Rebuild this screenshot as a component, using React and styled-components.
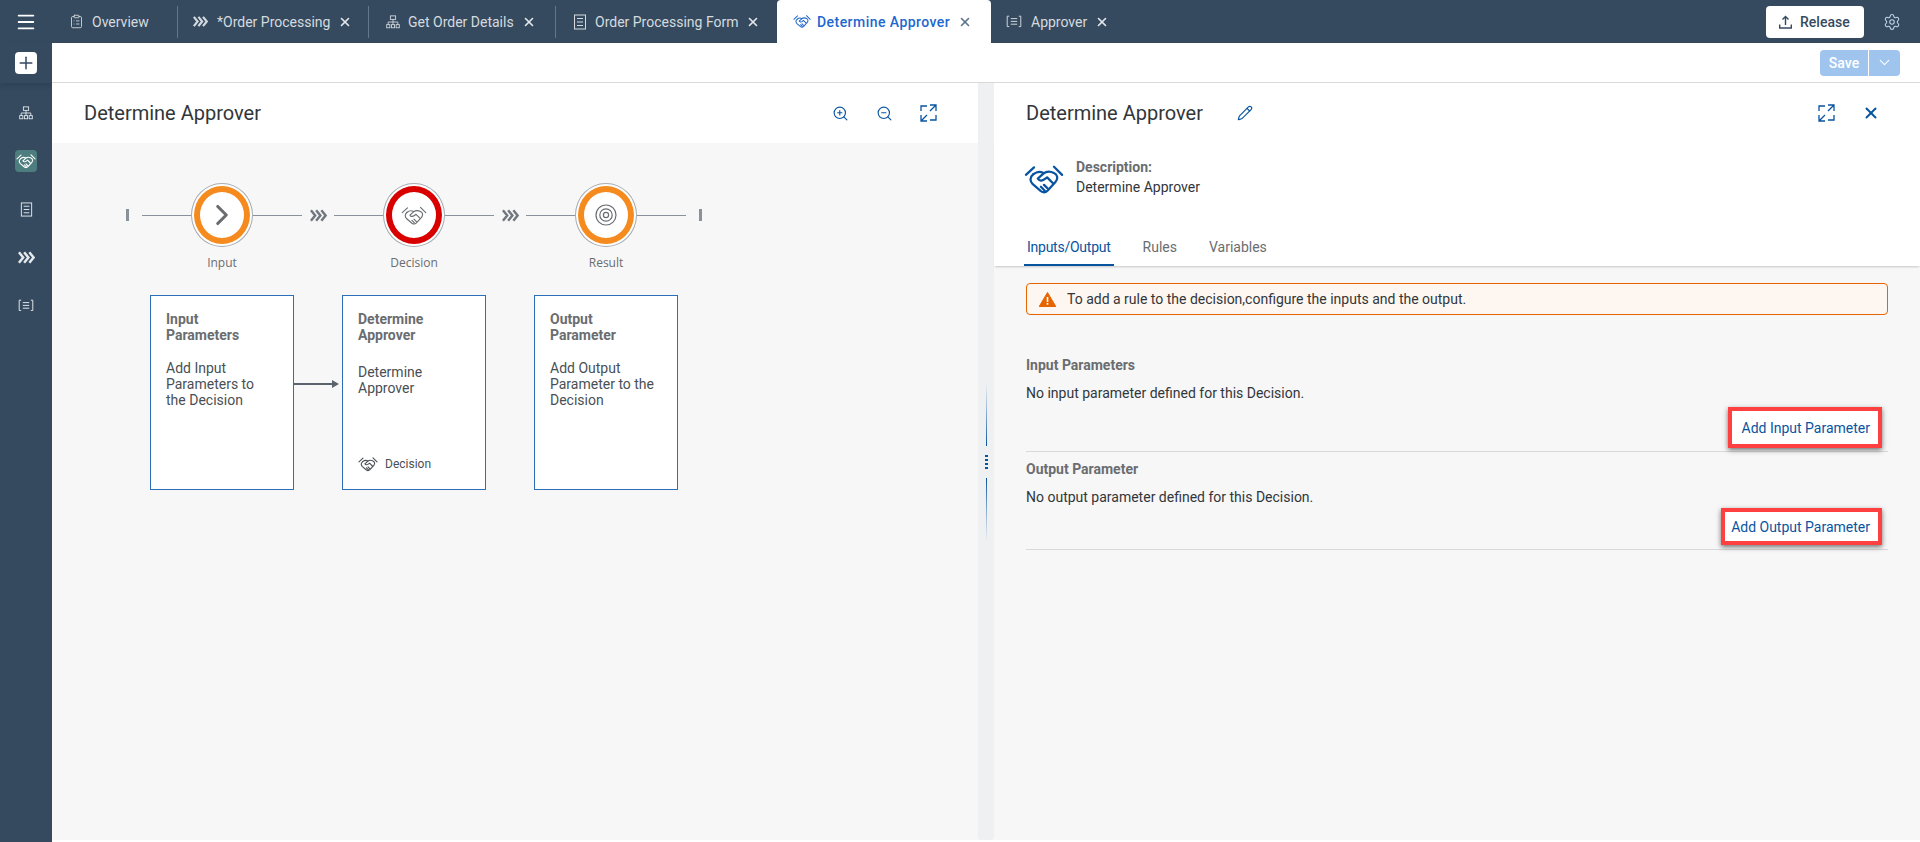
import React from 'react';
import styled, { createGlobalStyle } from 'styled-components';
import { X, ZoomIn, ZoomOut, Pencil, Settings, ChevronDown, ChevronRight, ClipboardList, Menu, Plus } from 'lucide-react';

const GlobalStyle = createGlobalStyle`
  html, body { margin: 0; padding: 0; height: 100%; background: #fff; }
  * { box-sizing: border-box; }
  body { font-family: Roboto, "Noto Sans", Arial, sans-serif; color: #32363a; overflow: hidden; }
`;

const Page = styled.div`
  display: flex;
  flex-direction: column;
  height: 842px;
  width: 1920px;
`;

// top shell bar with the editor tabs
const TopBar = styled.header`
  display: flex;
  align-items: center;
  height: 43px;
  background: #354a5f;
  flex: none;
`;

const MenuButton = styled.div`
  width: 52px;
  display: flex;
  justify-content: center;
  color: #fff;
`;

const TabList = styled.div`
  display: flex;
  align-items: center;
  flex: 1;
  align-self: stretch;
`;

const Tab = styled.div`
  display: flex;
  align-items: center;
  width: ${p => p.$w}px;
  padding-left: ${p => p.$pl}px;
  height: ${p => (p.$active ? '43px' : '32px')};
  font-size: 14px;
  font-weight: ${p => (p.$active ? 500 : 400)};
  letter-spacing: ${p => (p.$active ? '0.45px' : '0')};
  color: ${p => (p.$active ? '#1d67cf' : '#d5dadf')};
  background: ${p => (p.$active ? '#fff' : 'transparent')};
  border-radius: ${p => (p.$active ? '4px 4px 0 0' : '0')};
  border-right: ${p => (p.$sep ? '1px solid #64778a' : 'none')};
  white-space: nowrap;
`;

const TabIcon = styled.span`
  display: flex;
  width: ${p => p.$w || 23}px;
  flex: none;
`;

const TabClose = styled.span`
  display: flex;
  margin-left: 8px;
  color: ${p => (p.$dark ? '#5b738b' : '#e4e8ec')};
`;

const ReleaseButton = styled.button`
  display: flex;
  align-items: center;
  gap: 8px;
  width: 98px;
  height: 32px;
  padding: 0 0 0 13px;
  border: none;
  border-radius: 4px;
  background: #fff;
  color: #354a5f;
  font: 500 14px Roboto, sans-serif;
`;

const GearButton = styled.div`
  display: flex;
  margin: 0 19px 0 19px;
  color: #c3d4e6;
`;

const Body = styled.div`
  display: flex;
  flex: 1;
  min-height: 0;
`;

const Sidebar = styled.nav`
  width: 52px;
  flex: none;
  background: #354a5f;
  display: flex;
  flex-direction: column;
`;

const SideTop = styled.div`
  height: 40px;
  display: flex;
  align-items: center;
  justify-content: center;
  box-shadow: 0 3px 5px rgba(0, 0, 0, 0.12);
`;

const PlusButton = styled.div`
  width: 22px;
  height: 22px;
  border-radius: 4px;
  background: #fff;
  color: #354a5f;
  display: flex;
  align-items: center;
  justify-content: center;
`;

const SideList = styled.div`
  padding-top: 6px;
  display: flex;
  flex-direction: column;
`;

const SideItem = styled.div`
  height: 48px;
  display: flex;
  align-items: center;
  justify-content: center;
  color: #e6eaee;
`;

const SideActive = styled.div`
  width: 22px;
  height: 22px;
  border-radius: 4px;
  background: #4d7d7e;
  color: #fff;
  display: flex;
  align-items: center;
  justify-content: center;
`;

const Main = styled.main`
  flex: 1;
  display: flex;
  flex-direction: column;
  min-width: 0;
  background: #fff;
  padding-bottom: 2px;
`;

const Toolbar = styled.div`
  height: 40px;
  flex: none;
  display: flex;
  align-items: center;
  justify-content: flex-end;
  padding: 0 20px 0 0;
  border-bottom: 1px solid #d9d9d9;
`;

const SaveGroup = styled.div`
  display: flex;
  gap: 1px;
  height: 26px;
`;

const SaveButton = styled.div`
  width: 48px;
  background: #9fc5ef;
  color: #fff;
  font-size: 14px;
  font-weight: 500;
  border-radius: 4px 0 0 4px;
  display: flex;
  align-items: center;
  justify-content: center;
`;

const SaveArrow = styled.div`
  width: 31px;
  background: #9fc5ef;
  color: #fff;
  border-radius: 0 4px 4px 0;
  display: flex;
  align-items: center;
  justify-content: center;
`;

const Panels = styled.div`
  display: flex;
  flex: 1;
  min-height: 0;
`;

const LeftPanel = styled.section`
  width: 926px;
  flex: none;
  display: flex;
  flex-direction: column;
`;

const Splitter = styled.div`
  width: 16px;
  flex: none;
  background: #eef0f2;
  border-radius: 0 0 2px 2px;
  display: flex;
  flex-direction: column;
  align-items: center;
  justify-content: center;
  gap: 9px;
`;

const GripLine = styled.div`
  width: 1px;
  height: 63px;
  background: linear-gradient(${p => (p.$up ? 'to bottom' : 'to top')}, rgba(8, 84, 160, 0), rgba(8, 84, 160, 0.35) 40%, #0854a0);
`;

const GripDots = styled.div`
  display: flex;
  flex-direction: column;
  gap: 2px;
`;

const GripDot = styled.div`
  width: 3px;
  height: 2px;
  background: #0854a0;
`;

const RightPanel = styled.section`
  flex: 1;
  min-width: 0;
  display: flex;
  flex-direction: column;
  background: #f7f7f7;
`;

const PanelHeader = styled.div`
  height: 60px;
  flex: none;
  background: #fff;
  display: flex;
  align-items: center;
  padding-left: ${p => p.$pl}px;
`;

const PanelTitle = styled.h2`
  margin: 0;
  font-size: 20px;
  font-weight: 400;
  color: #32363a;
`;

const HeaderActions = styled.div`
  margin-left: auto;
  display: flex;
  align-items: center;
  gap: ${p => p.$gap}px;
  padding-right: ${p => p.$pr}px;
  color: #0854a0;
`;

const EditIcon = styled.span`
  display: flex;
  margin-left: 34px;
  color: #0854a0;
`;

const Canvas = styled.div`
  flex: 1;
  background: #f7f7f7;
  padding: 40px 0 0 74px;
`;

const Flow = styled.div`
  display: flex;
  align-items: flex-start;
  height: 88px;
`;

const FlowCell = styled.div`
  height: 64px;
  display: flex;
  align-items: center;
  justify-content: center;
  flex: none;
  width: ${p => p.$w}px;
`;

const EndBar = styled.div`
  width: 3px;
  height: 12px;
  background: #89919a;
`;

const FlowLine = styled.div`
  width: 100%;
  height: 1px;
  background: #89919a;
`;

const Node = styled.div`
  width: 62px;
  flex: none;
  display: flex;
  flex-direction: column;
  align-items: center;
`;

const NodeRing = styled.div`
  width: 62px;
  height: 64px;
  border-radius: 50%;
  border: 1px solid #a4abb2;
  background: #fff;
  display: flex;
  align-items: center;
  justify-content: center;
`;

const NodeInner = styled.div`
  width: 56px;
  height: 58px;
  border-radius: 50%;
  border: 6px solid ${p => p.$color};
  background: #fff;
  display: flex;
  align-items: center;
  justify-content: center;
  color: #6a6d70;
`;

const NodeLabel = styled.div`
  margin-top: 8px;
  line-height: 16px;
  font-family: "Open Sans", sans-serif;
  font-size: 12px;
  color: #6a6d70;
  white-space: nowrap;
`;

const CardRow = styled.div`
  display: flex;
  align-items: flex-start;
  margin: 24px 0 0 24px;
`;

const Card = styled.div`
  width: 144px;
  height: 195px;
  flex: none;
  background: #fff;
  border: 1px solid #2b6fb8;
  padding: 15px 18px 17px 15px;
  display: flex;
  flex-direction: column;
`;

const CardTitle = styled.div`
  width: min-content;
  font-size: 14px;
  font-weight: 700;
  line-height: 16px;
  color: #6a6d70;
`;

const CardText = styled.div`
  margin-top: ${p => p.$mt}px;
  font-size: 14px;
  line-height: 16px;
  color: #4a4f54;
`;

const CardFoot = styled.div`
  margin-top: auto;
  display: flex;
  align-items: center;
  gap: 7px;
  font-size: 12px;
  color: #4a4f54;
`;

const CardGap = styled.div`
  width: 48px;
  flex: none;
  display: flex;
  padding-top: 84px;
`;

const DetailsHead = styled.div`
  background: #fff;
  flex: none;
  height: 123px;
  padding: 14px 32px 0 30px;
  display: flex;
  flex-direction: column;
  box-shadow: 0 2px 2px -1px rgba(0, 0, 0, 0.2);
`;

const DescRow = styled.div`
  display: flex;
  gap: 12px;
  color: #0854a0;
`;

const DescIcon = styled.span`
  display: flex;
  margin-top: 6px;
`;

const DescText = styled.div`
  font-size: 14px;
  line-height: 20px;
  color: #32363a;
`;

const DescLabel = styled.div`
  font-weight: 700;
  color: #6a6d70;
`;

const TabStrip = styled.div`
  margin-top: auto;
  display: flex;
  gap: 26px;
`;

const StripTab = styled.div`
  height: 36px;
  padding: 0 3px;
  font-size: 14px;
  line-height: 34px;
  letter-spacing: ${p => (p.$active ? '-0.25px' : '0')};
  color: ${p => (p.$active ? '#0854a0' : '#6a6d70')};
  border-bottom: 2px solid ${p => (p.$active ? '#0854a0' : 'transparent')};
`;

const DetailsBody = styled.div`
  padding: 17px 32px 0;
`;

const Strip = styled.div`
  height: 32px;
  display: flex;
  align-items: center;
  gap: 11px;
  padding-left: 12px;
  background: #fef7f1;
  border: 1px solid #e76500;
  border-radius: 4px;
  font-size: 14px;
  color: #32363a;
`;

const ParamSection = styled.div`
  padding: ${p => p.$pt}px 0 ${p => p.$pb}px;
  border-bottom: 1px solid #d9d9d9;
`;

const ParamTitle = styled.div`
  font-size: 14px;
  font-weight: 700;
  line-height: 16px;
  color: #6a6d70;
`;

const ParamText = styled.div`
  margin-top: 12px;
  font-size: 14px;
  line-height: 16px;
  color: #32363a;
`;

const ParamAction = styled.div`
  display: flex;
  justify-content: flex-end;
  padding-right: 6px;
  margin-top: ${p => p.$mt}px;
`;

const HighlightBox = styled.div`
  width: ${p => p.$w}px;
  height: ${p => p.$h}px;
  border: 4px solid #ff4040;
  background: #fff;
  box-shadow: 0 2px 5px rgba(0, 0, 0, 0.55);
  display: flex;
  align-items: center;
  justify-content: flex-end;
  padding-right: 8px;
  font-size: 14px;
  color: #0854a0;
  white-space: nowrap;
`;

// the icons below are drawn by hand, the packages have no SAP style glyphs
const Handshake = ({ size = 20, weight = 1.8 }) => (
  <svg width={size} height={size * 0.78} viewBox="0 0 32 25" fill="none" stroke="currentColor" strokeWidth={weight} strokeLinecap="round" strokeLinejoin="round">
    <path d="M1.5 9.5L8 3.5M30.5 9.5L24 3" />
    <path d="M7.5 9C4.5 11.5 4.5 14.5 7 17L13.5 22.5C15.5 24 17.5 23.5 19 22L25 15.5C27.5 12.5 27 9.5 24 8C21 6.5 18 6.5 15.5 8.5L11 12.5C12 14.5 14.5 14.5 16.5 13L18.5 11.5L23 16" />
    <path d="M15.5 8C13 6.5 10 7 7.5 9M16 17.5L19 20.5M13.5 19L16.5 22" />
  </svg>
);

const OrgIcon = ({ size = 14 }) => (
  <svg width={size} height={size} viewBox="0 0 16 16" fill="none" stroke="currentColor" strokeWidth="1">
    <rect x="5" y="1" width="6" height="4" />
    <path d="M8 5v3M2.5 11V8h11v3M8 8v3" />
    <rect x="0.8" y="11" width="3.6" height="3.6" />
    <rect x="6.2" y="11" width="3.6" height="3.6" />
    <rect x="11.6" y="11" width="3.6" height="3.6" />
  </svg>
);

const FormIcon = ({ size = 16 }) => (
  <svg width={size} height={size} viewBox="0 0 16 16" fill="none" stroke="currentColor" strokeWidth="1">
    <rect x="2.5" y="1" width="11" height="14" />
    <path d="M5 4.5h6M5 8h6M5 11.5h6" />
  </svg>
);

const Chevrons = ({ w = 17, h = 13 }) => (
  <svg width={w} height={h} viewBox="0 0 18 13" fill="none" stroke="currentColor" strokeWidth="2.6">
    <path d="M1 1l4.5 5.5L1 12M6.5 1L11 6.5 6.5 12M12 1l4.5 5.5L12 12" />
  </svg>
);

const RuleIcon = ({ size = 16 }) => (
  <svg width={size} height={size * 0.8} viewBox="0 0 20 16" fill="none" stroke="currentColor" strokeWidth="1.2">
    <path d="M4 1.5H1.5v13H4M16 1.5h2.5v13H16M6 4.5h8M6 8h8M6 11.5h8" />
  </svg>
);

const FitIcon = () => (
  <svg width="17" height="18" viewBox="0 0 17 18" fill="none" stroke="currentColor" strokeWidth="1.3">
    <path d="M1 7V2h6M16 11v5h-6" />
    <path d="M10 1h6v6M16 1l-6 6M1 11v6h6M1 17l6-6" />
  </svg>
);

const TargetIcon = () => (
  <svg width="22" height="22" viewBox="0 0 22 22" fill="none" stroke="currentColor" strokeWidth="1.2">
    <circle cx="11" cy="11" r="10" />
    <circle cx="11" cy="11" r="6.2" />
    <circle cx="11" cy="11" r="2.6" />
  </svg>
);

const UploadIcon = () => (
  <svg width="13" height="14" viewBox="0 0 13 14" fill="none" stroke="currentColor" strokeWidth="1.4">
    <path d="M6.5 10V1.5M3.5 4.5l3-3 3 3M0.7 9.5v3.5h11.6V9.5" />
  </svg>
);

const WarningIcon = () => (
  <svg width="17" height="15" viewBox="0 0 17 15">
    <path d="M8.5 0.5L16.8 14.5H0.2Z" fill="#e76500" stroke="#e76500" strokeLinejoin="round" />
    <path d="M7.7 5h1.6v5H7.7zM7.7 11h1.6v1.7H7.7z" fill="#fff" />
  </svg>
);

const ArrowLine = () => (
  <svg width="45" height="10" viewBox="0 0 45 10">
    <path d="M0 5h39" stroke="#5b636c" strokeWidth="2" />
    <path d="M38 1L45 5l-7 4z" fill="#5b636c" />
  </svg>
);

const ChevronCell = styled(FlowCell)`
  color: #70777e;
`;

const tabs = [
  { label: 'Overview', icon: <ClipboardList size={15} strokeWidth={1.4} />, w: 126, pl: 17, iw: 23, sep: true, noClose: true },
  { label: '*Order Processing', icon: <Chevrons w={15} h={11} />, w: 191, pl: 15, iw: 24, sep: true },
  { label: 'Get Order Details', icon: <OrgIcon />, w: 187, pl: 17, iw: 22, sep: true },
  { label: 'Order Processing Form', icon: <FormIcon />, w: 221, pl: 16, iw: 23 },
  { label: 'Determine Approver', icon: <Handshake size={18} />, w: 214, pl: 16, iw: 24, active: true },
  { label: 'Approver', icon: <RuleIcon />, w: 140, pl: 15, iw: 25 },
];

const App = () => {
  return (
    <Page>
      <GlobalStyle />
      <TopBar>
        <MenuButton><Menu size={22} strokeWidth={2} /></MenuButton>
        <TabList>
          {tabs.map(tab => (
            <Tab key={tab.label} $w={tab.w} $pl={tab.pl} $sep={tab.sep} $active={tab.active}>
              <TabIcon $w={tab.iw}>{tab.icon}</TabIcon>
              {tab.label}
              {!tab.noClose && (
                <TabClose $dark={tab.active}><X size={14} strokeWidth={2.8} /></TabClose>
              )}
            </Tab>
          ))}
        </TabList>
        <ReleaseButton><UploadIcon />Release</ReleaseButton>
        <GearButton><Settings size={18} strokeWidth={1.4} /></GearButton>
      </TopBar>

      <Body>
        <Sidebar>
          <SideTop>
            <PlusButton><Plus size={20} strokeWidth={1.8} /></PlusButton>
          </SideTop>
          <SideList>
            <SideItem><OrgIcon /></SideItem>
            <SideItem><SideActive><Handshake size={20} /></SideActive></SideItem>
            <SideItem><FormIcon size={15} /></SideItem>
            <SideItem><Chevrons /></SideItem>
            <SideItem><RuleIcon /></SideItem>
          </SideList>
        </Sidebar>

        <Main>
          <Toolbar>
            <SaveGroup>
              <SaveButton>Save</SaveButton>
              <SaveArrow><ChevronDown size={17} strokeWidth={1.5} /></SaveArrow>
            </SaveGroup>
          </Toolbar>
          <Panels>
            <LeftPanel>
              <PanelHeader $pl={32}>
                <PanelTitle>Determine Approver</PanelTitle>
                <HeaderActions $gap={27} $pr={41}>
                  <ZoomIn size={17} strokeWidth={1.6} />
                  <ZoomOut size={17} strokeWidth={1.6} />
                  <FitIcon />
                </HeaderActions>
              </PanelHeader>
              <Canvas>
                <Flow>
                  <FlowCell $w={3}><EndBar /></FlowCell>
                  <FlowCell $w={13} />
                  <FlowCell $w={49}><FlowLine /></FlowCell>
                  <Node>
                    <NodeRing><NodeInner $color="#f58b1f"><ChevronRight size={34} strokeWidth={2.2} /></NodeInner></NodeRing>
                    <NodeLabel>Input</NodeLabel>
                  </Node>
                  <FlowCell $w={49}><FlowLine /></FlowCell>
                  <ChevronCell $w={32}><Chevrons /></ChevronCell>
                  <FlowCell $w={49}><FlowLine /></FlowCell>
                  <Node>
                    <NodeRing><NodeInner $color="#d90000"><Handshake size={26} weight={1.4} /></NodeInner></NodeRing>
                    <NodeLabel>Decision</NodeLabel>
                  </Node>
                  <FlowCell $w={49}><FlowLine /></FlowCell>
                  <ChevronCell $w={32}><Chevrons /></ChevronCell>
                  <FlowCell $w={49}><FlowLine /></FlowCell>
                  <Node>
                    <NodeRing><NodeInner $color="#f58b1f"><TargetIcon /></NodeInner></NodeRing>
                    <NodeLabel>Result</NodeLabel>
                  </Node>
                  <FlowCell $w={49}><FlowLine /></FlowCell>
                  <FlowCell $w={13} />
                  <FlowCell $w={3}><EndBar /></FlowCell>
                </Flow>
                <CardRow>
                  <Card>
                    <CardTitle>Input Parameters</CardTitle>
                    <CardText $mt={17}>Add Input Parameters to the Decision</CardText>
                  </Card>
                  <CardGap><ArrowLine /></CardGap>
                  <Card>
                    <CardTitle>Determine Approver</CardTitle>
                    <CardText $mt={21}>Determine Approver</CardText>
                    <CardFoot><Handshake size={20} />Decision</CardFoot>
                  </Card>
                  <CardGap />
                  <Card>
                    <CardTitle>Output Parameter</CardTitle>
                    <CardText $mt={17}>Add Output Parameter to the Decision</CardText>
                  </Card>
                </CardRow>
              </Canvas>
            </LeftPanel>

            <Splitter>
              <GripLine $up />
              <GripDots>
                <GripDot /><GripDot /><GripDot /><GripDot />
              </GripDots>
              <GripLine />
            </Splitter>

            <RightPanel>
              <PanelHeader $pl={32}>
                <PanelTitle>Determine Approver</PanelTitle>
                <EditIcon><Pencil size={16} strokeWidth={1.7} /></EditIcon>
                <HeaderActions $gap={27} $pr={40}>
                  <FitIcon />
                  <X size={18} strokeWidth={2.6} />
                </HeaderActions>
              </PanelHeader>
              <DetailsHead>
                <DescRow>
                  <DescIcon><Handshake size={40} /></DescIcon>
                  <DescText>
                    <DescLabel>Description:</DescLabel>
                    Determine Approver
                  </DescText>
                </DescRow>
                <TabStrip>
                  <StripTab $active>Inputs/Output</StripTab>
                  <StripTab>Rules</StripTab>
                  <StripTab>Variables</StripTab>
                </TabStrip>
              </DetailsHead>
              <DetailsBody>
                <Strip>
                  <WarningIcon />
                  To add a rule to the decision,configure the inputs and the output.
                </Strip>
                <ParamSection $pt={42} $pb={3}>
                  <ParamTitle>Input Parameters</ParamTitle>
                  <ParamText>No input parameter defined for this Decision.</ParamText>
                  <ParamAction $mt={6}>
                    <HighlightBox $w={154} $h={41}>Add Input Parameter</HighlightBox>
                  </ParamAction>
                </ParamSection>
                <ParamSection $pt={9} $pb={4}>
                  <ParamTitle>Output Parameter</ParamTitle>
                  <ParamText>No output parameter defined for this Decision.</ParamText>
                  <ParamAction $mt={3}>
                    <HighlightBox $w={161} $h={37}>Add Output Parameter</HighlightBox>
                  </ParamAction>
                </ParamSection>
              </DetailsBody>
            </RightPanel>
          </Panels>
        </Main>
      </Body>
    </Page>
  );
};

export default App;
